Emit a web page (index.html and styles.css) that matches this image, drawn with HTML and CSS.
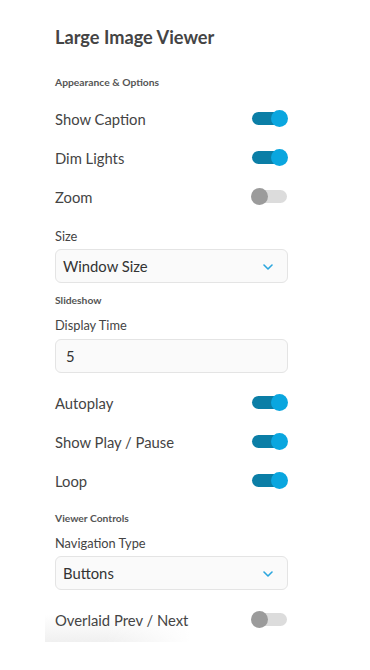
FILE: index.html
```html
<!DOCTYPE html>
<html>
<head>
<meta charset="utf-8">
<link rel="stylesheet" href="styles.css">
</head>
<body>
<div class="panel">
  <h1 class="title">Large Image Viewer</h1>

  <div class="section">Appearance &amp; Options</div>
  <div class="rows">
    <div class="row"><span>Show Caption</span><span class="toggle on"></span></div>
    <div class="row"><span>Dim Lights</span><span class="toggle on"></span></div>
    <div class="row"><span>Zoom</span><span class="toggle"></span></div>
  </div>

  <div class="field-label first">Size</div>
  <div class="select"><span>Window Size</span>
    <svg class="chev" width="10" height="6" viewBox="0 0 10 6"><path d="M1 1l4 4 4-4" fill="none" stroke="#2ba6de" stroke-width="1.6" stroke-linecap="round" stroke-linejoin="round"/></svg>
  </div>

  <div class="section s2">Slideshow</div>
  <div class="field-label">Display Time</div>
  <div class="select input"><span>5</span></div>

  <div class="rows r2">
    <div class="row"><span>Autoplay</span><span class="toggle on"></span></div>
    <div class="row"><span>Show Play / Pause</span><span class="toggle on"></span></div>
    <div class="row"><span>Loop</span><span class="toggle on"></span></div>
  </div>

  <div class="section s3">Viewer Controls</div>
  <div class="field-label">Navigation Type</div>
  <div class="select"><span>Buttons</span>
    <svg class="chev" width="10" height="6" viewBox="0 0 10 6"><path d="M1 1l4 4 4-4" fill="none" stroke="#2ba6de" stroke-width="1.6" stroke-linecap="round" stroke-linejoin="round"/></svg>
  </div>

  <div class="rows last">
    <div class="row"><span>Overlaid Prev / Next</span><span class="toggle"></span></div>
  </div>
</div>
</body>
</html>
```

FILE: styles.css
```css
html, body {
  margin: 0;
  padding: 0;
  background: #fff;
}
body {
  font-family: Lato, "Open Sans", sans-serif;
  color: #444;
}
.panel {
  width: 233px;
  padding: 25px 0 0 55px;
}
.title {
  margin: 0;
  font-size: 18.2px;
  line-height: 24px;
  font-weight: 700;
  color: #444;
}
.section {
  margin-top: 26px;
  font-size: 10.3px;
  line-height: 14px;
  font-weight: 700;
  color: #555;
}
.section.s2 { margin-top: 10px; }
.section.s3 { margin-top: 11px; }
.rows { margin-top: 10px; }
.rows.r2 { margin-top: 10px; }
.rows.last {
  margin-top: 10px;
  margin-left: -10px;
  padding-left: 10px;
  padding-bottom: 3px;
  background:
    linear-gradient(to right, rgba(255,255,255,0) 0, rgba(255,255,255,0) 60px, #fff 145px),
    linear-gradient(to bottom, #fff 35%, #f0f0f0 100%);
}
.row {
  height: 39px;
  display: flex;
  align-items: center;
  justify-content: space-between;
  font-size: 14.8px;
  color: #444;
}
.toggle {
  position: relative;
  width: 35px;
  height: 13px;
  border-radius: 7px;
  background: #dcdcdc;
  margin-right: 1px;
}
.toggle::after {
  content: "";
  position: absolute;
  top: -2px;
  left: -1px;
  width: 17px;
  height: 17px;
  border-radius: 50%;
  background: #9b9b9b;
}
.toggle.on { background: #0b7ea6; }
.toggle.on::after {
  left: auto;
  right: -1px;
  background: #0aa6df;
}
.field-label {
  margin-top: 10px;
  font-size: 12.8px;
  line-height: 16px;
  color: #444;
}
.field-label.first { margin-top: 12px; }
.select {
  margin-top: 5px;
  box-sizing: border-box;
  height: 34px;
  border: 1px solid #e4e4e4;
  border-radius: 6px;
  background: #fafafa;
  display: flex;
  align-items: center;
  justify-content: space-between;
  padding: 0 14px 0 7px;
  font-size: 14.8px;
  color: #333;
}
.input { margin-top: 6px; padding-left: 10px; }
.chev { display: block; margin-top: 1px; }
```
